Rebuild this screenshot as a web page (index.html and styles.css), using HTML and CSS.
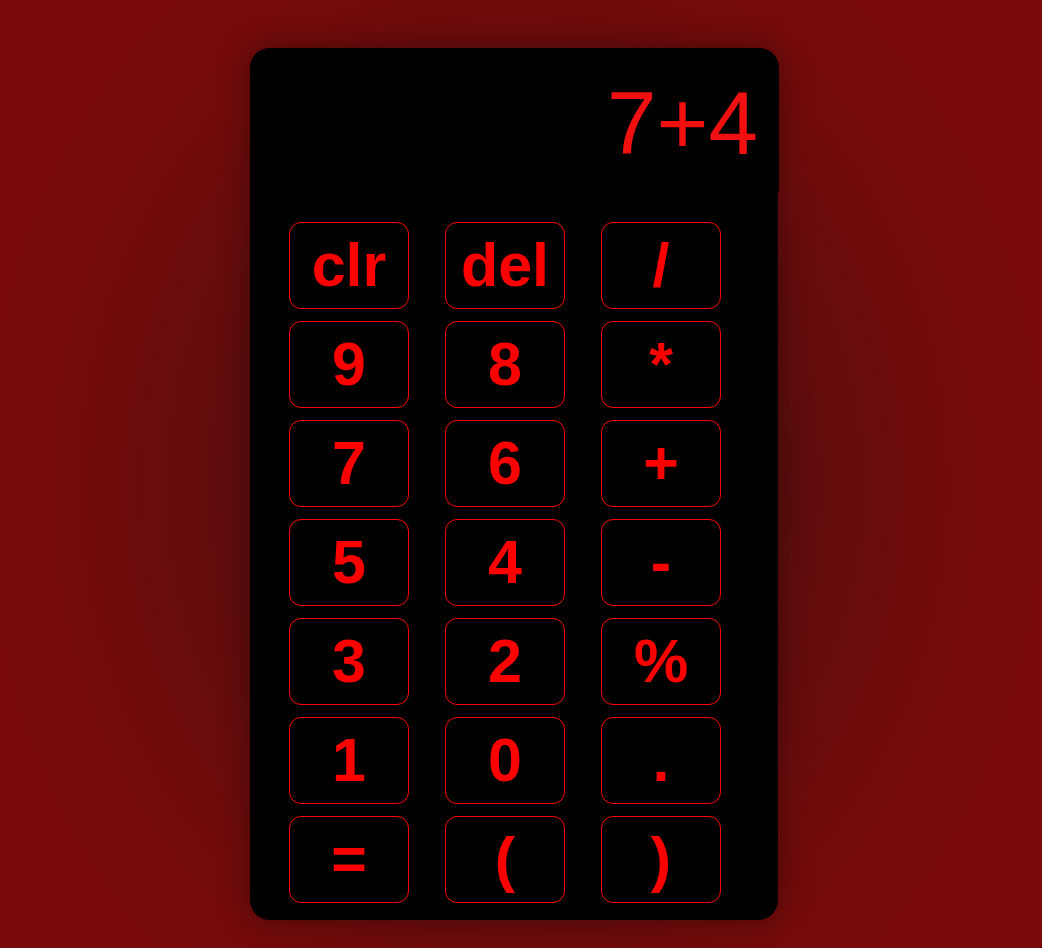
FILE: index.html
```html
<!DOCTYPE html>
<html>
<head>
<meta charset="utf-8">
<link rel="stylesheet" href="styles.css">
</head>
<body>
<div class="page">
  <div class="calc">
    <div class="display">7+4</div>
    <div class="keys">
      <button class="key">clr</button>
      <button class="key">del</button>
      <button class="key">/</button>
      <button class="key">9</button>
      <button class="key">8</button>
      <button class="key">*</button>
      <button class="key">7</button>
      <button class="key">6</button>
      <button class="key">+</button>
      <button class="key">5</button>
      <button class="key">4</button>
      <button class="key">-</button>
      <button class="key">3</button>
      <button class="key">2</button>
      <button class="key">%</button>
      <button class="key">1</button>
      <button class="key">0</button>
      <button class="key">.</button>
      <button class="key">=</button>
      <button class="key">(</button>
      <button class="key">)</button>
    </div>
  </div>
</div>
</body>
</html>
```

FILE: styles.css
```css
html, body {
  margin: 0;
  padding: 0;
  height: 100%;
}
body {
  background: radial-gradient(ellipse 540px 640px at 514px 484px, #420d0d 0%, #590d0d 45%, #6f0b0b 75%, #7a0a0a 100%);
  background-color: #7a0a0a;
  font-family: "Liberation Sans", Arial, sans-serif;
  overflow: hidden;
}
.page {
  padding: 48px 0 0 250px;
}
.calc {
  width: 528px;
  height: 872px;
  background: #000;
  border-radius: 20px;
  box-shadow: 0 0 30px rgba(0, 0, 0, 0.35);
  display: flex;
  flex-direction: column;
}
.display {
  width: 529px;
  height: 144px;
  box-sizing: border-box;
  background: #000;
  border-radius: 20px 20px 0 0;
  color: #f11010;
  font-size: 89px;
  line-height: 1;
  text-align: right;
  padding: 31px 21px 0 0;
}
.keys {
  display: grid;
  grid-template-columns: repeat(3, 120px);
  grid-auto-rows: 87px;
  column-gap: 36px;
  row-gap: 12px;
  padding: 30px 0 0 39px;
}
.key {
  background: #000;
  border: 1px solid #f00;
  border-radius: 12px;
  color: #f00;
  font-family: "Liberation Sans", Arial, sans-serif;
  font-weight: bold;
  font-size: 61px;
  line-height: 1;
  padding: 0;
  display: flex;
  align-items: center;
  justify-content: center;
}
```
